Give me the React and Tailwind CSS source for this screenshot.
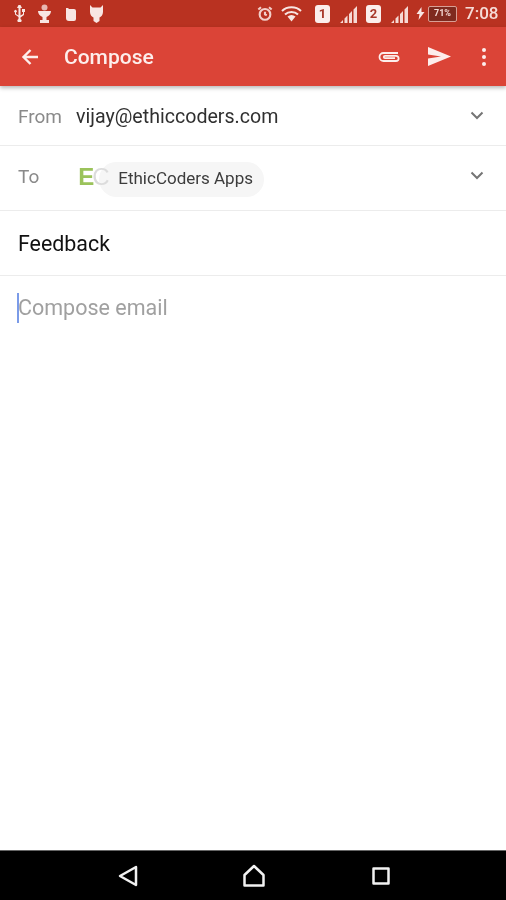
const R = "font-['Roboto',sans-serif]";

function Sim({ n, className }) {
  return (
    <div className={`w-[15px] h-[18px] bg-[#fbeeec] rounded-[3px] flex items-center justify-center text-[13px] font-bold text-[#a8382a] leading-none ${className}`}>
      {n}
    </div>
  );
}

function Signal({ className }) {
  return (
    <svg width="17" height="18" viewBox="0 0 17 18" className={className} fill="#f6d9d4">
      <path d="M0 18 3 15v3zM4.500 18v-4.500L7.500 10.500V18zM9 18V9l3-3v12zM13.500 18V4.500L17 1v17z" />
    </svg>
  );
}

function Row({ children, h, border = true }) {
  return (
    <div className={`flex items-center shrink-0 ${h} ${border ? "border-b border-[#ececec]" : ""}`}>
      {children}
    </div>
  );
}

function Chevron({ className }) {
  return (
    <svg width="14" height="9" viewBox="0 0 14 9" fill="none" className={`ml-auto mr-[22px] ${className}`}>
      <path d="M1.500 1.500 L7 7 L12.500 1.500" stroke="#757575" strokeWidth="2" />
    </svg>
  );
}

export default function App() {
  return (
    <div className={`w-[506px] h-[900px] bg-white flex flex-col overflow-hidden blur-[0.4px] ${R}`}>
      <div className="h-[27px] bg-[#b93221] flex items-center shrink-0 text-[#fbeeec]">
        <svg width="13" height="17" viewBox="0 0 13 17" className="ml-[13px]" fill="#f8e6e3">
          <path d="M5.500 0h2L9 3H7.500v7.500L10 9V7H9V4h3v3h-1v3l-3.500 2.500V14a2 2 0 1 1-2 0v-2L2 9.500V7.500a1.300 1.300 0 1 1 1 0V9l2.500 1.500V3H4z" />
        </svg>
        <svg width="13" height="20" viewBox="0 0 13 20" className="ml-[12px]" fill="#f8e6e3">
          <path d="M0 7h13c0 3-2 5-4.500 6v3H11v3H2v-3h2.500v-3C2 12 0 10 0 7z" />
          <circle cx="6.500" cy="3.500" r="3" opacity=".75" />
        </svg>
        <svg width="10" height="14" viewBox="0 0 10 14" className="ml-[15px]" fill="#f8e6e3">
          <path d="M0 1h2.500v1H8a2 2 0 0 1 2 2v8a2 2 0 0 1-2 2H3a3 3 0 0 1-3-3z" />
        </svg>
        <svg width="13" height="18" viewBox="0 0 13 18" className="ml-[14px]" fill="#f8e6e3">
          <path d="M0 0l2.500 2.500h8L13 0v7c0 3-2 5-3.500 5.500V16l-3 2-3-2v-3.500C2 12 0 10 0 7z" />
        </svg>
        <svg width="16" height="17" viewBox="0 0 18 18" fill="none" stroke="#f3cfc9" strokeWidth="2.400" className="ml-[154px]">
          <circle cx="9" cy="10" r="6" />
          <path d="M9 7v3l2 1M1.500 4.500 4.500 2M16.500 4.500 13.500 2" />
        </svg>
        <svg width="21" height="17" viewBox="0 0 21 17" className="ml-[8px]" fill="none" stroke="#f8e6e3" strokeWidth="2">
          <path d="M1 6c5-5 14-5 19 0M4 9.500c3.500-3.500 9.500-3.500 13 0" />
          <path d="M6.500 11.500c2.500-2 5.500-2 8 0l-4 5z" fill="#f8e6e3" stroke="none" />
        </svg>
        <Sim n="1" className="ml-[13px]" />
        <Signal className="ml-[10px]" />
        <Sim n="2" className="ml-[9px]" />
        <Signal className="ml-[10px]" />
        <svg width="9" height="13" viewBox="0 0 8 13" className="ml-[8px]" fill="#f8e6e3">
          <path d="M5 0 0 7h3l-1 6 6-8H5z" />
        </svg>
        <div className="ml-[3px] w-[29px] h-[16px] border border-[#d99f95] rounded-[2px] bg-[#7f2a1f] text-[9px] font-bold text-[#f3d9d4] flex items-center justify-center leading-none">
          71%
        </div>
        <span className="ml-[8px] text-[17px] font-medium text-[#f6dcd7] leading-none">7:08</span>
      </div>

      <div className="h-[59px] bg-[#db4437] flex items-center shrink-0 shadow-[0_2px_4px_rgba(0,0,0,0.28)] relative">
        <svg width="18" height="18" viewBox="0 0 18 18" fill="none" stroke="#fdeeec" strokeWidth="2.400" className="ml-[21px]">
          <path d="M17 9H3M9.500 2 2.500 9l7 7" />
        </svg>
        <span className="ml-[25px] mt-[1px] text-[21px] font-medium text-[#fdeeec] leading-none">Compose</span>
        <svg width="24" height="14" viewBox="0 0 24 14" fill="none" stroke="#fdeeec" strokeWidth="1.800" className="ml-[223px]">
          <path d="M21 3H6.500a4 4 0 0 0 0 8H19a2.600 2.600 0 0 0 0-5.200H8a1.200 1.200 0 0 0 0 2.400H18" />
        </svg>
        <svg width="24" height="19" viewBox="0 0 24 19" fill="#fdeeec" className="ml-[26px]">
          <path d="M1 0 24 9.500 1 19l0-7.500 13-2L1 7.500z" />
        </svg>
        <div className="ml-[31px] flex flex-col gap-[3px]">
          <span className="w-[4px] h-[4px] rounded-full bg-[#fdeeec]" />
          <span className="w-[4px] h-[4px] rounded-full bg-[#fdeeec]" />
          <span className="w-[4px] h-[4px] rounded-full bg-[#fdeeec]" />
        </div>
      </div>

      <Row h="h-[60px]">
        <span className="ml-[18px] mt-[2px] text-[19px] text-[#8a8a8a] leading-none">From</span>
        <span className="ml-[14px] mt-[2px] text-[19.600px] text-[#303030] leading-none">vijay@ethiccoders.com</span>
        <Chevron />
      </Row>

      <Row h="h-[65px]">
        <span className="ml-[18px] -mt-[3px] text-[19px] text-[#8a8a8a] leading-none">To</span>
        <div className="ml-[39px] flex items-center relative">
          <div className="w-[165px] h-[35px] mt-[2px] ml-[21px] rounded-full bg-[#f6f6f6] flex items-center pl-[19px] text-[17px] text-[#3c3c3c]">
            EthicCoders Apps
          </div>
          <span className="absolute left-0 top-[-1px] text-[24px] leading-[35px] font-['Liberation_Sans',sans-serif] font-bold text-[#9bc35b] tracking-[-2px]">
            E<span className="font-normal text-[#dcdcdc]">C</span>
          </span>
        </div>
        <Chevron className="-mt-[5px]" />
      </Row>

      <Row h="h-[65px]">
        <span className="ml-[18px] mt-[2px] text-[21.400px] text-[#111111] leading-none">Feedback</span>
      </Row>

      <div className="flex-1 relative">
        <div className="flex items-center mt-[17px] ml-[17px]">
          <span className="w-[2px] h-[30px] bg-[#7b9be8]" />
          <span className="-ml-px text-[21.500px] text-[#a0a0a0] leading-none">Compose email</span>
        </div>
      </div>

      <div className="h-[50px] bg-black border-t border-[#666] flex items-center shrink-0">
        <svg width="20" height="22" viewBox="0 0 20 22" fill="none" stroke="#f2f2f2" strokeWidth="2.500" strokeLinejoin="round" className="ml-[118px]">
          <path d="M18 2 2 11l16 9z" />
        </svg>
        <svg width="22" height="23" viewBox="0 0 22 23" fill="none" stroke="#f2f2f2" strokeWidth="2.500" strokeLinejoin="round" className="ml-[105px]">
          <path d="M11 2 20.500 11v10.500H1.500V11z" />
        </svg>
        <svg width="18" height="18" viewBox="0 0 18 18" fill="none" stroke="#f2f2f2" strokeWidth="2.500" strokeLinejoin="round" className="ml-[107px]">
          <rect x="1.500" y="1.500" width="15" height="15" />
        </svg>
      </div>
    </div>
  );
}
